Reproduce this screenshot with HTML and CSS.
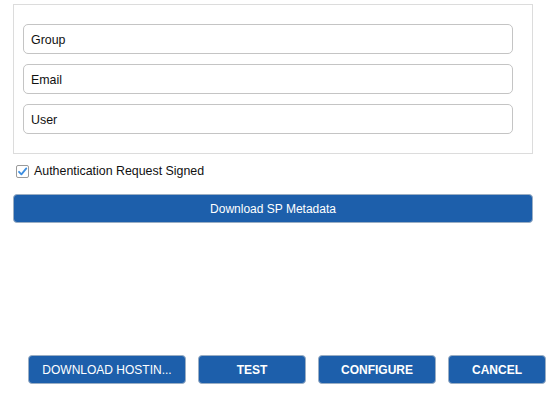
FILE: index.html
```html
<!DOCTYPE html>
<html>
<head>
<meta charset="utf-8">
<link rel="stylesheet" href="styles.css">
</head>
<body>
<div class="page">
  <div class="content">
    <div class="panel">
      <div class="field">Group</div>
      <div class="field">Email</div>
      <div class="field">User</div>
    </div>
    <label class="check-row">
      <span class="checkbox">
        <svg width="11" height="11" viewBox="0 0 11 11"><path d="M2 5.8 L4.4 8.3 L9.3 2.4" fill="none" stroke="#3d8ee0" stroke-width="1.8" stroke-linecap="round" stroke-linejoin="round"/></svg>
      </span>
      <span>Authentication Request Signed</span>
    </label>
    <button class="btn btn-wide">Download SP Metadata</button>
  </div>
  <div class="footer">
    <button class="btn btn-normal w1">DOWNLOAD HOSTIN...</button>
    <button class="btn btn-bold w2">TEST</button>
    <button class="btn btn-bold w3">CONFIGURE</button>
    <button class="btn btn-bold w4">CANCEL</button>
  </div>
</div>
</body>
</html>
```
FILE: styles.css
```css
html, body {
  margin: 0;
  padding: 0;
  background: #fff;
  font-family: "Liberation Sans", Arial, sans-serif;
  font-size: 12px;
  color: #111;
}
.page {
  width: 548px;
  height: 416px;
  display: flex;
  flex-direction: column;
}
.content {
  padding: 4px 15px 0 13px;
}
.panel {
  border: 1px solid #dcdcdc;
  padding: 19px 19px 19px 9px;
  display: flex;
  flex-direction: column;
  gap: 10px;
}
.field {
  height: 28px;
  border: 1px solid #c4c4c4;
  border-radius: 5px;
  padding: 1px 7px 0;
  box-sizing: content-box;
  display: flex;
  align-items: center;
  font-size: 12.4px;
  color: #111;
}
.field { height: 27px; }
.check-row {
  display: flex;
  align-items: center;
  gap: 5px;
  margin: 10px 0 0 3px;
  height: 14px;
  font-size: 12.4px;
}
.checkbox {
  width: 11px;
  height: 11px;
  border: 1px solid #9a9a9a;
  border-radius: 2px;
  display: flex;
  align-items: center;
  justify-content: center;
  background: #fff;
}
.btn {
  font-family: "Liberation Sans", Arial, sans-serif;
  font-size: 12px;
  color: #fff;
  background: #1d5fab;
  border: 1px solid #9aaec4;
  border-radius: 4px;
  height: 29px;
  padding: 0;
  display: flex;
  align-items: center;
  justify-content: center;
  box-sizing: border-box;
}
.btn-wide {
  width: 520px;
  margin-top: 16px;
}
.footer {
  margin-top: 132px;
  display: flex;
  justify-content: flex-end;
  gap: 12px;
  padding-right: 2px;
}
.btn-bold { font-weight: bold; }
.btn-normal { font-weight: normal; }
.w1 { width: 158px; }
.w2 { width: 108px; }
.w3 { width: 118px; }
.w4 { width: 98px; }
```
